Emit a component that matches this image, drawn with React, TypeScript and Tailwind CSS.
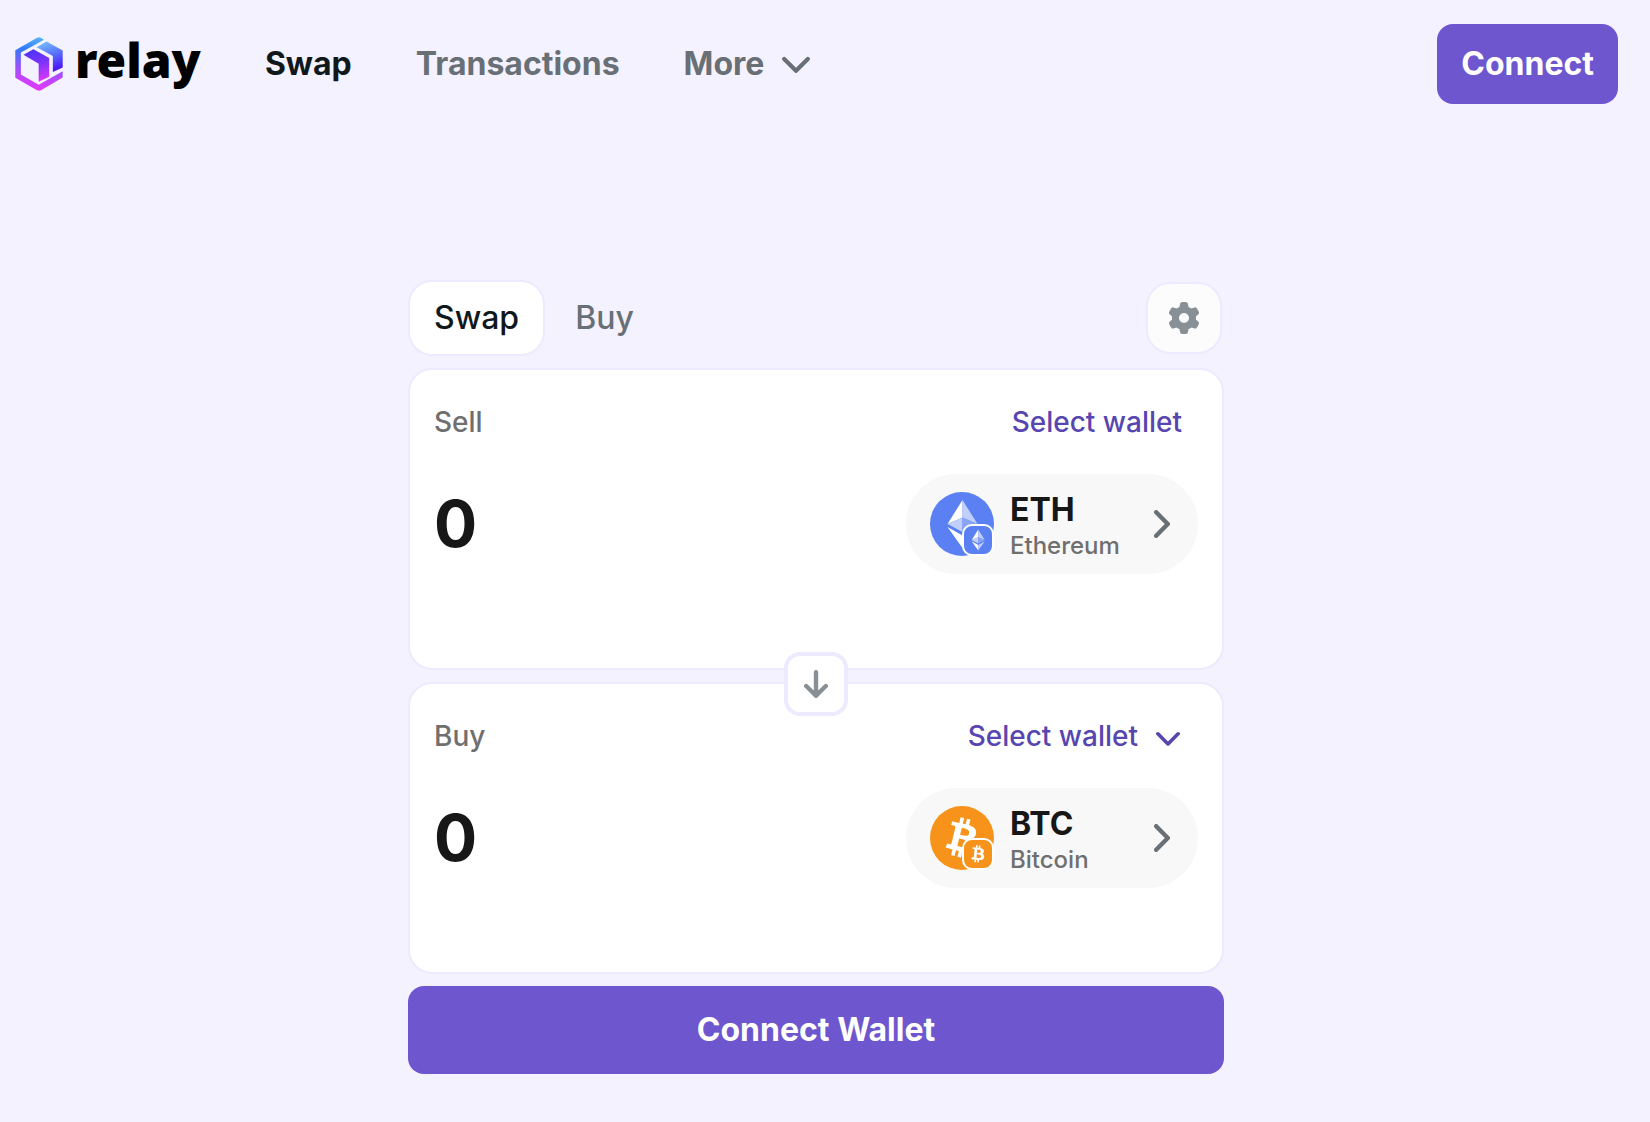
import { useState } from 'react';
import { FaGear } from 'react-icons/fa6';

const tokens = {
    ETH: { symbol: 'ETH', name: 'Ethereum', color: 'bg-[#5a80f3]', Mark: EthMark },
    BTC: { symbol: 'BTC', name: 'Bitcoin', color: 'bg-[#f7931a]', Mark: BtcMark },
}

function Logo(){
    return (
        <svg viewBox="0 0 144 164" className="h-[54px] w-12" aria-hidden="true">
            <defs>
                <linearGradient id="ring" x1="0.6" y1="0" x2="0.5" y2="1">
                    <stop offset="0" stopColor="#5cb8f8" />
                    <stop offset="0.25" stopColor="#2f7bfb" />
                    <stop offset="0.6" stopColor="#9a52fb" />
                    <stop offset="1" stopColor="#e836fb" />
                </linearGradient>
                <linearGradient id="side" x1="0.3" y1="0" x2="0.6" y2="1">
                    <stop offset="0" stopColor="#72bdfb" />
                    <stop offset="0.55" stopColor="#5562fb" />
                    <stop offset="1" stopColor="#4a10fa" />
                </linearGradient>
                <linearGradient id="front" x1="0.4" y1="0" x2="0.6" y2="1">
                    <stop offset="0" stopColor="#4a32fa" />
                    <stop offset="0.5" stopColor="#8434fa" />
                    <stop offset="1" stopColor="#dc36fb" />
                </linearGradient>
            </defs>
            <path fill="url(#ring)" d="M66 2 Q72 -1 78 2 L87 8 L17 47 V114 L71 145 L144 104 V123 L78 162 Q72 165 66 162 L0 124 V40 Z" />
            <path fill="url(#side)" d="M65 31 L95 14 L144 41 V93 L114 106 V58 Z" />
            <path fill="url(#front)" d="M25 54 L55 37 L103 64 V121 L71 136 V81 Z" />
        </svg>
    )
}

function EthMark({ className }: { className: string }){
    return (
        <svg viewBox="0 0 64 64" className={className} aria-hidden="true">
            <path fill="#fff" d="M32.5 8 L17.5 32 L32.5 25.5 Z" />
            <path fill="#c1cffa" d="M32.5 8 L47.5 32 L32.5 25.5 Z" />
            <path fill="#c1cffa" d="M32.5 25.5 L17.5 32 L32.5 40 Z" />
            <path fill="#8aa5f7" d="M32.5 25.5 L47.5 32 L32.5 40 Z" />
            <path fill="#fff" d="M17.5 35 L32.5 43.5 V56 Z" />
            <path fill="#c1cffa" d="M47.5 35 L32.5 43.5 V56 Z" />
        </svg>
    )
}

function BtcMark({ className }: { className: string }){
    return (
        <svg viewBox="0 0 24 24" className={className} aria-hidden="true">
            <path fill="#fff" d="M17.288 10.291c.24-1.59-.974-2.45-2.64-3.03l.54-2.153-1.315-.33-.525 2.107c-.345-.087-.705-.167-1.064-.25l.526-2.127-1.32-.33-.54 2.165c-.285-.067-.565-.132-.84-.2l-1.815-.45-.35 1.407s.975.225.955.236c.535.136.63.486.615.766l-1.477 5.92c-.075.166-.24.406-.614.314.015.02-.96-.24-.96-.24l-.66 1.51 1.71.426.93.242-.54 2.19 1.32.327.54-2.17c.36.1.705.19 1.05.273l-.51 2.154 1.32.33.545-2.19c2.24.427 3.93.257 4.64-1.774.57-1.637-.03-2.58-1.217-3.196.854-.193 1.5-.76 1.68-1.93h.01zm-3.01 4.22c-.404 1.64-3.157.75-4.05.53l.72-2.9c.896.23 3.757.67 3.33 2.37zm.41-4.24c-.37 1.49-2.662.735-3.405.55l.654-2.64c.744.18 3.137.524 2.75 2.084v.006z" />
        </svg>
    )
}

function ChevronDown({ className }: { className: string }){
    return (
        <svg viewBox="0 0 28 17" className={className} fill="none" stroke="currentColor" strokeWidth="4.2" strokeLinecap="round" strokeLinejoin="round" aria-hidden="true">
            <path d="M2.2 3 L14 14.8 L25.8 3" />
        </svg>
    )
}

function TokenButton({ token }: { token: 'ETH' | 'BTC' }){
    const { symbol, name, color, Mark } = tokens[token]

    return (
        <button type="button" className="flex h-25 w-73 shrink-0 items-center gap-4 rounded-full bg-[#f8f8f8] pr-7 pl-6 text-left">
            <span className={`relative size-16 shrink-0 rounded-full ${color}`}>
                <Mark className="size-16" />
                <span className={`absolute right-0 bottom-0 size-8 rounded-[10px] border-2 border-white ${color}`}>
                    <Mark className={token === 'BTC' ? 'size-7 -rotate-8' : 'size-7'} />
                </span>
            </span>
            <span className="flex flex-1 flex-col pt-2">
                <span className="text-[32px] leading-9 font-bold text-[#171717]">{symbol}</span>
                <span className="text-2xl leading-9 font-medium text-[#6f6f6f]">{name}</span>
            </span>
            <svg viewBox="0 0 16 28" className="h-7 w-4" fill="none" stroke="#687076" strokeWidth="4.4" strokeLinecap="round" strokeLinejoin="round" aria-hidden="true">
                <path d="M2.2 2.2 L13.8 14 L2.2 25.8" />
            </svg>
        </button>
    )
}

export default function App(){
    const [tab, setTab] = useState('Swap')
    const [sell, setSell] = useState('0')
    const [buy, setBuy] = useState('0')

    const activeTab = 'border-[#ede9fe] bg-white text-[#11181c]'
    const idleTab = 'border-transparent text-[#687076]'

    return (
        <div className="min-h-screen bg-[#f5f2ff] font-['Inter',sans-serif]">
            <header className="flex items-center py-6 pr-8 pl-[15px]">
                <a href="#" className="flex items-center gap-3">
                    <Logo />
                    <span className="pb-2 font-['Noto_Sans',sans-serif] text-5xl leading-[60px] font-black text-black">relay</span>
                </a>
                <nav className="ml-16 flex items-center gap-16 text-[32px] leading-10 font-bold text-[#687076]">
                    <a href="#swap" className="text-[#11181c]">Swap</a>
                    <a href="#transactions">Transactions</a>
                    <button type="button" className="flex items-center gap-[18px]">
                        More
                        <ChevronDown className="h-[17px] w-7" />
                    </button>
                </nav>
                <button type="button" className="ml-auto h-20 rounded-2xl bg-[#6e56cf] px-6 text-[32px] leading-10 font-bold text-white">
                    Connect
                </button>
            </header>

            <main className="pt-38 pr-[18px] pb-12">
                <div className="mx-auto flex max-w-[816px] flex-col gap-3">
                    <div className="flex items-center">
                        <button type="button" onClick={() => setTab('Swap')}
                            className={`h-19 rounded-3xl border-2 px-6 text-[32px] leading-10 font-medium ${tab === 'Swap' ? activeTab : idleTab}`}>
                            Swap
                        </button>
                        <button type="button" onClick={() => setTab('Buy')}
                            className={`ml-1 h-19 rounded-3xl border-2 px-6 text-[32px] leading-10 font-medium ${tab === 'Buy' ? activeTab : idleTab}`}>
                            Buy
                        </button>
                        <button type="button" aria-label="Settings"
                            className="mr-0.5 ml-auto flex h-18 w-19 items-center justify-center rounded-3xl border-2 border-[#ede9fe] bg-[#fcfcfc] text-[#889096]">
                            <FaGear className="size-8" />
                        </button>
                    </div>

                    <section className="relative rounded-3xl border-2 border-[#ede9fe] bg-white px-6 pt-6 pb-[94px]">
                        <div className="flex h-14 items-center justify-between text-[28px] leading-10 font-medium">
                            <label htmlFor="sell" className="text-[#6f6f6f]">Sell</label>
                            <button type="button" className="px-4 text-[#5746af]">Select wallet</button>
                        </div>
                        <div className="mt-6 flex items-center">
                            <input id="sell" type="text" value={sell} onChange={(e) => setSell(e.target.value)}
                                className="h-20 w-full min-w-0 bg-transparent text-[64px] leading-20 font-bold text-[#171717] focus:outline-none" />
                            <TokenButton token="ETH" />
                        </div>
                        <button type="button" aria-label="Switch tokens"
                            className="absolute -bottom-12 left-1/2 z-10 flex size-16 -translate-x-1/2 items-center justify-center rounded-2xl border-4 border-[#ede9fe] bg-white">
                            <svg viewBox="0 0 24 28" className="h-7 w-6" fill="none" stroke="#889096" strokeWidth="4.4" strokeLinecap="round" strokeLinejoin="round" aria-hidden="true">
                                <path d="M12 2.2 V25.8 M2.2 16 L12 25.8 L21.8 16" />
                            </svg>
                        </button>
                    </section>

                    <section className="rounded-3xl border-2 border-[#ede9fe] bg-white px-6 pt-6 pb-[84px]">
                        <div className="flex h-14 items-center justify-between text-[28px] leading-10 font-medium">
                            <label htmlFor="buy" className="text-[#6f6f6f]">Buy</label>
                            <button type="button" className="flex items-center gap-[18px] pr-[18px] pl-4 text-[#5746af]">
                                Select wallet
                                <ChevronDown className="mt-1 h-[15px] w-6" />
                            </button>
                        </div>
                        <div className="mt-6 flex items-center">
                            <input id="buy" type="text" value={buy} onChange={(e) => setBuy(e.target.value)}
                                className="h-20 w-full min-w-0 bg-transparent text-[64px] leading-20 font-bold text-[#171717] focus:outline-none" />
                            <TokenButton token="BTC" />
                        </div>
                    </section>

                    <button type="button" className="h-22 rounded-2xl bg-[#6e56cf] text-[32px] leading-10 font-bold text-white">
                        Connect Wallet
                    </button>
                </div>
            </main>
        </div>
    )
}
